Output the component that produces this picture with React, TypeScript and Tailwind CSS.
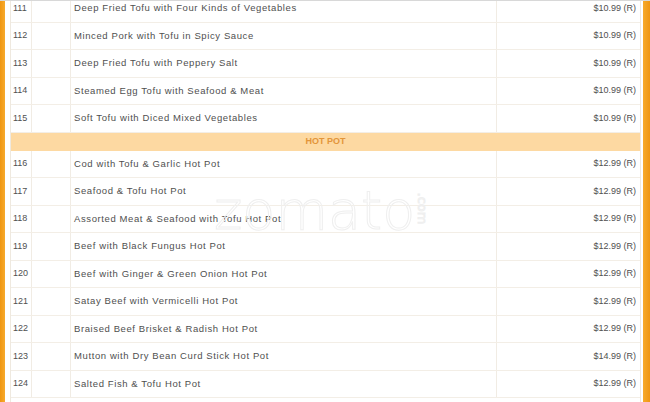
const tofu = [
  ["111", "Deep Fried Tofu with Four Kinds of Vegetables", "$10.99 (R)"],
  ["112", "Minced Pork with Tofu in Spicy Sauce", "$10.99 (R)"],
  ["113", "Deep Fried Tofu with Peppery Salt", "$10.99 (R)"],
  ["114", "Steamed Egg Tofu with Seafood & Meat", "$10.99 (R)"],
  ["115", "Soft Tofu with Diced Mixed Vegetables", "$10.99 (R)"],
];

const hotPot = [
  ["116", "Cod with Tofu & Garlic Hot Pot", "$12.99 (R)"],
  ["117", "Seafood & Tofu Hot Pot", "$12.99 (R)"],
  ["118", "Assorted Meat & Seafood with Tofu Hot Pot", "$12.99 (R)"],
  ["119", "Beef with Black Fungus Hot Pot", "$12.99 (R)"],
  ["120", "Beef with Ginger & Green Onion Hot Pot", "$12.99 (R)"],
  ["121", "Satay Beef with Vermicelli Hot Pot", "$12.99 (R)"],
  ["122", "Braised Beef Brisket & Radish Hot Pot", "$12.99 (R)"],
  ["123", "Mutton with Dry Bean Curd Stick Hot Pot", "$14.99 (R)"],
  ["124", "Salted Fish & Tofu Hot Pot", "$12.99 (R)"],
];

function MenuRow({ item }: { item: string[] }) {
  const [num, name, price] = item;
  return (
    <div className="flex h-[27.5px] shrink-0 items-center border-b border-[#f3eee6]">
      <div className="flex h-full w-[21px] items-center border-r border-[#f1ece4] pl-[2px] text-[9px]">{num}</div>
      <div className="h-full w-[39px] border-r border-[#f1ece4]" />
      <div className="flex h-full w-[426px] items-center border-r border-[#f1ece4] pl-[3px] tracking-[0.6px]">{name}</div>
      <div className="flex h-full flex-1 items-center justify-end pr-[4px] text-[9px]">{price}</div>
    </div>
  );
}

export default function App() {
  return (
    <div className="relative flex h-[402px] w-[650px] overflow-hidden bg-white font-['Liberation_Sans',Arial,sans-serif] text-[9.5px] text-[#4f4f4f]">
      <div className="w-[5px] shrink-0 bg-[linear-gradient(90deg,#ef9612,#f7aa2c)]" />
      <div className="w-[5px] shrink-0" />
      <div className="flex min-w-0 flex-1 flex-col border-l border-r border-[#efe9df]">
        <div className="mt-[-5px] flex flex-col">
          {tofu.map((item) => (
            <MenuRow key={item[0]} item={item} />
          ))}
          <div className="flex h-[18px] shrink-0 items-center justify-center bg-[#fdd9a2] text-[9px] font-bold text-[#e3953a]">
            HOT POT
          </div>
          {hotPot.map((item) => (
            <MenuRow key={item[0]} item={item} />
          ))}
        </div>
      </div>
      <div className="w-[2px] shrink-0" />
      <div className="w-[7px] shrink-0 bg-[linear-gradient(90deg,#f7aa2c,#ef9612)]" />
      <div className="pointer-events-none absolute left-0 right-0 top-0 h-[1px] bg-[#d8d8d8]" />
      <div className="pointer-events-none absolute left-[214px] top-[184px] flex items-start">
        <span className="font-['DejaVu_Sans',sans-serif] text-[54px] font-extralight leading-none text-transparent [-webkit-text-stroke:1px_#efefef]">
          zomato
        </span>
        <span className="ml-[-8px] mt-[18px] rotate-90 font-['DejaVu_Sans',sans-serif] text-[13px] leading-none text-transparent [-webkit-text-stroke:1px_#efefef]">
          .com
        </span>
      </div>
    </div>
  );
}
